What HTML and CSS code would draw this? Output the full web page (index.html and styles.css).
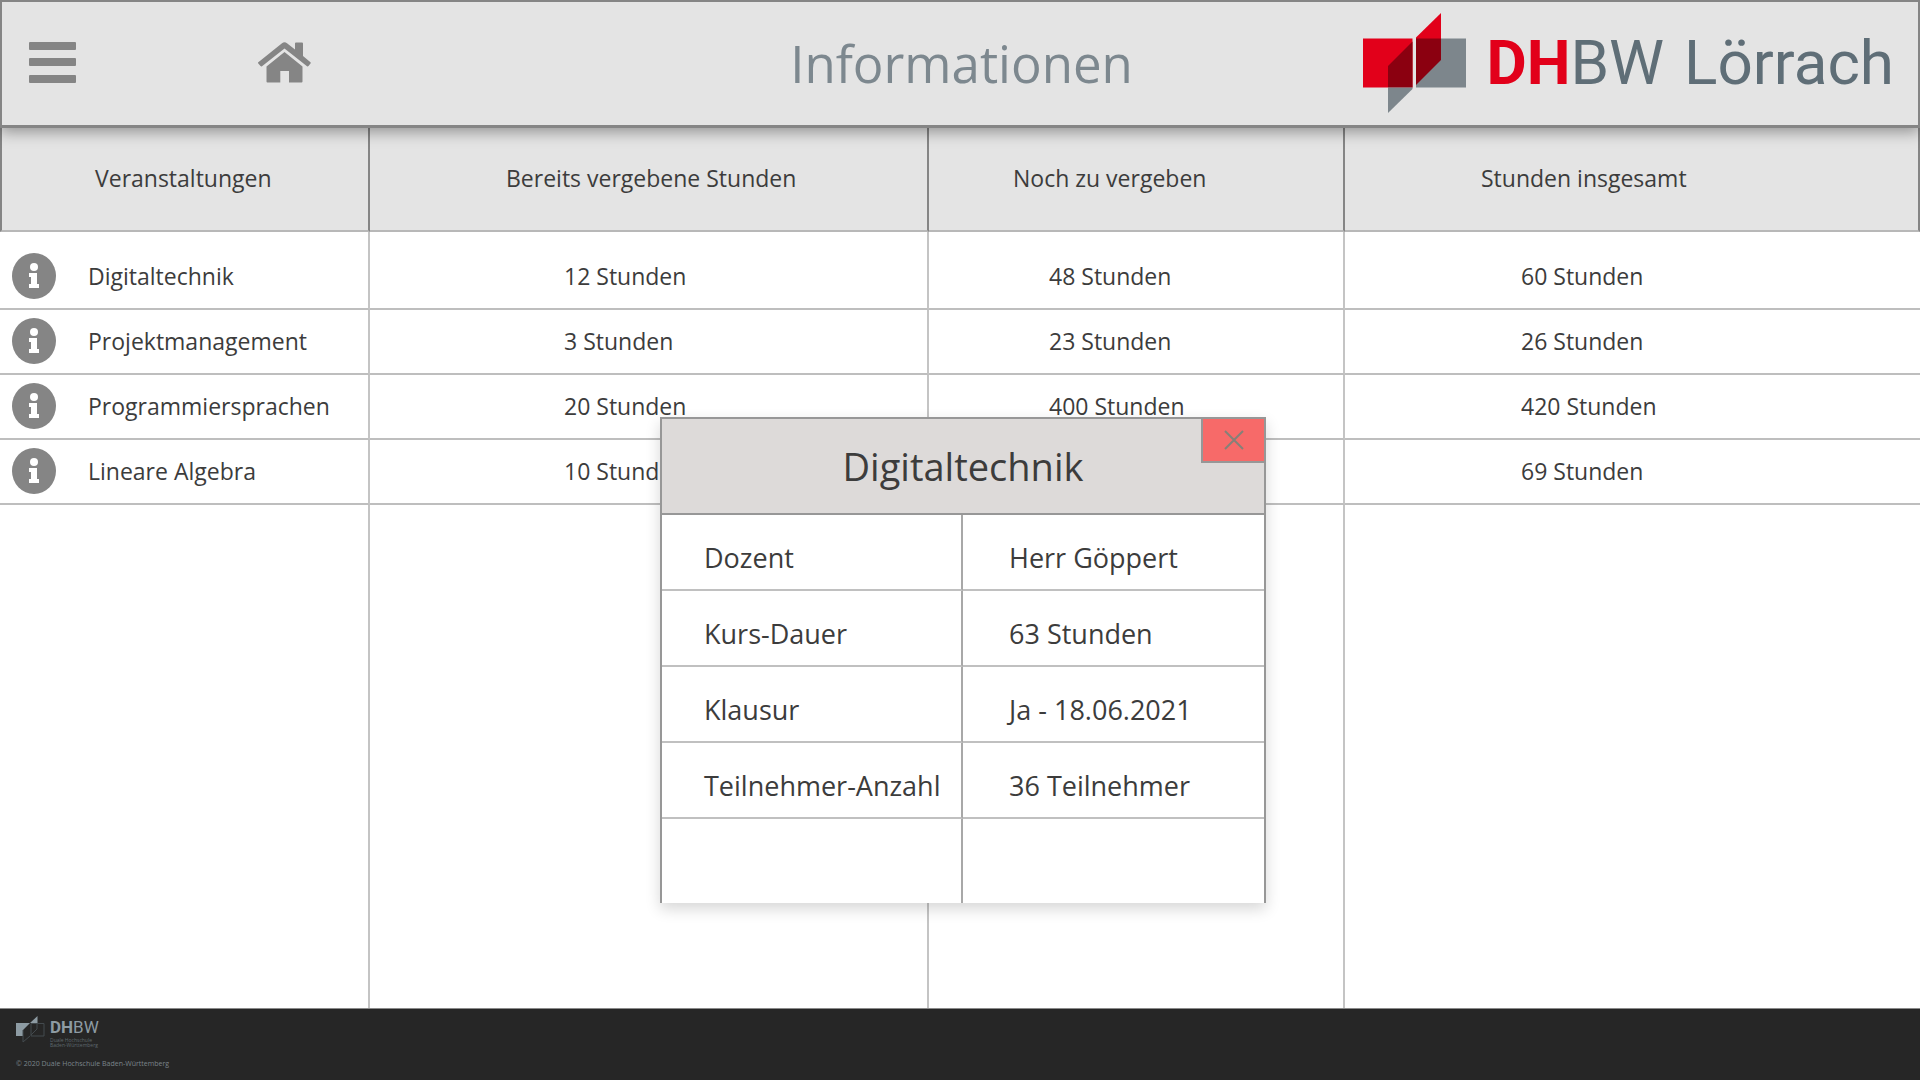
FILE: index.html
```html
<!DOCTYPE html>
<html lang="de">
<head>
<meta charset="utf-8">
<meta name="viewport" content="width=device-width, initial-scale=1">
<title>Informationen – DHBW Lörrach</title>
<link rel="stylesheet" href="styles.css">
</head>
<body>
<svg class="sprite" aria-hidden="true">
  <symbol id="info" viewBox="0 0 44 46">
    <ellipse cx="22" cy="23" rx="22" ry="23" fill="#858585"/>
    <circle cx="22" cy="14" r="4" fill="#fff"/>
    <path d="M17 20h8v11h2v4H17v-4h2v-7h-2z" fill="#fff"/>
  </symbol>
</svg>
<header class="topbar">
  <nav class="topnav">
    <button class="icon-button" type="button" aria-label="Menü">
      <svg width="47" height="41" viewBox="0 0 47 41" fill="#858585">
        <rect width="47" height="8" rx="1"/><rect y="16" width="47" height="8" rx="1"/><rect y="33" width="47" height="8" rx="1"/>
      </svg>
    </button>
    <a class="icon-button" href="#" aria-label="Startseite">
      <svg width="53" height="41" viewBox="0 0 53 41" fill="#858585">
        <path d="M0 20.500 24 1.200Q26.500-.8 29 1.200L37 7.600V1.500Q37 .5 38 .5H44Q45 .5 45 1.500V14L52.500 20.200Q53 21 52.500 21.600L50.500 24Q49.700 24.800 49 24.200L26.500 6.500 4 24.200Q3.200 24.800 2.500 24L.3 21.500Q-.2 21 0 20.500Z"/>
        <path d="M26.500 10 44.500 24.500V39.500Q44.500 40.500 43.500 40.500H31V29H22.300V40.500H9.500Q8.500 40.500 8.500 39.500V24.500Z"/>
      </svg>
    </a>
  </nav>
  <h1 class="page-title">Informationen</h1>
  <div class="brand">
    <svg width="103" height="100" viewBox="0 0 103 100">
      <path d="M0 25.500H49.500V74.500H0z" fill="#e2001a"/>
      <path d="M25 53 49.500 28.500V74.500H25z" fill="#8b0010"/>
      <path d="M25 74.500H49.500V76L25 100z" fill="#7d868c"/>
      <path d="M53 25.500H103V74.500H53z" fill="#7d868c"/>
      <path d="M53 24.500 78 0V26H53z" fill="#e2001a"/>
      <path d="M53 25.500H78V47L53 72z" fill="#8b0010"/>
    </svg>
    <span class="brand-name"><span><b>DH</b>BW</span><span>Lörrach</span></span>
  </div>
</header>
<main class="content">
  <table class="courses">
    <colgroup><col class="c1"><col class="c2"><col class="c3"><col class="c4"></colgroup>
    <thead>
      <tr><th scope="col">Veranstaltungen</th><th scope="col">Bereits vergebene Stunden</th><th scope="col">Noch zu vergeben</th><th scope="col">Stunden insgesamt</th></tr>
    </thead>
    <tbody>
      <tr><td><div class="course"><button class="info" type="button" aria-label="Info zu Digitaltechnik"><svg width="44" height="46"><use href="#info"/></svg></button>Digitaltechnik</div></td><td>12 Stunden</td><td>48 Stunden</td><td>60 Stunden</td></tr>
      <tr><td><div class="course"><button class="info" type="button" aria-label="Info zu Projektmanagement"><svg width="44" height="46"><use href="#info"/></svg></button>Projektmanagement</div></td><td>3 Stunden</td><td>23 Stunden</td><td>26 Stunden</td></tr>
      <tr><td><div class="course"><button class="info" type="button" aria-label="Info zu Programmiersprachen"><svg width="44" height="46"><use href="#info"/></svg></button>Programmiersprachen</div></td><td>20 Stunden</td><td>400 Stunden</td><td>420 Stunden</td></tr>
      <tr><td><div class="course"><button class="info" type="button" aria-label="Info zu Lineare Algebra"><svg width="44" height="46"><use href="#info"/></svg></button>Lineare Algebra</div></td><td>10 Stunden</td><td></td><td>69 Stunden</td></tr>
      <tr class="filler"><td></td><td></td><td></td><td></td></tr>
    </tbody>
  </table>
</main>
<section class="dialog" role="dialog" aria-labelledby="dialog-title">
  <div class="dialog-head">
    <h2 id="dialog-title">Digitaltechnik</h2>
    <button class="close" type="button" aria-label="Schließen">
      <svg width="20" height="20" viewBox="0 0 20 20" stroke="#858078" stroke-width="2"><path d="M1 1 19 19M19 1 1 19"/></svg>
    </button>
  </div>
  <table class="details">
    <tbody>
      <tr><th scope="row">Dozent</th><td>Herr Göppert</td></tr>
      <tr><th scope="row">Kurs-Dauer</th><td>63 Stunden</td></tr>
      <tr><th scope="row">Klausur</th><td>Ja - 18.06.2021</td></tr>
      <tr><th scope="row">Teilnehmer-Anzahl</th><td>36 Teilnehmer</td></tr>
      <tr><td></td><td></td></tr>
    </tbody>
  </table>
</section>
<footer class="footer">
  <div class="footer-brand">
    <svg width="29" height="27" viewBox="0 0 29 27">
      <path d="M0 7H14L7 14V20H0z" fill="#8d9ba3"/>
      <path d="M14 7 21.500 0V7z" fill="#8d9ba3"/>
      <path d="M15 7.500H28V20H15zM14 20 7 26V14M21 7.500V13L15 19" fill="none" stroke="#434a4e"/>
    </svg>
    <div>
      <div class="footer-name"><b>DH</b>BW</div>
      <div class="footer-sub">Duale Hochschule<br>Baden-Württemberg</div>
    </div>
  </div>
  <small class="copyright">© 2020 Duale Hochschule Baden-Württemberg</small>
</footer>
</body>
</html>
```
FILE: styles.css
```css
* { box-sizing: border-box; }

body {
  margin: 0;
  min-height: 100vh;
  display: flex;
  flex-direction: column;
  position: relative;
  background: #fff;
  color: #3c3c3c;
  font: 23px/32px "Open Sans", "Noto Sans", sans-serif;
}

h1, h2 { margin: 0; font-weight: 400; }

button { padding: 0; border: 0; background: none; cursor: pointer; }

svg { display: block; }

.sprite { position: absolute; width: 0; height: 0; }

.topbar {
  position: relative;
  display: grid;
  grid-template-columns: 1fr auto 1fr;
  align-items: center;
  height: 128px;
  padding: 0 24px 2px 27px;
  background: #e4e4e4;
  border: 2px solid #858585;
  border-bottom-width: 3px;
  box-shadow: 0 4px 14px rgba(0, 0, 0, .36);
}

.topnav { display: flex; align-items: center; gap: 182px; }

.page-title { color: #7d888f; font-size: 51px; line-height: 72px; }

.brand { display: flex; justify-content: flex-end; align-items: center; gap: 20px; }

.brand-name {
  display: flex;
  gap: 20px;
  color: #5f6e77;
  font: 62px/72px Roboto, sans-serif;
}

.brand-name b { color: #e2001a; }

.content { flex: 1; display: flex; }

.courses {
  width: 100%;
  table-layout: fixed;
  border-collapse: separate;
  border-spacing: 0;
}

.c1 { width: 370px; }
.c2 { width: 559px; }
.c3 { width: 416px; }

.courses thead tr { background: #e4e4e4; }

.courses th {
  height: 104px;
  padding: 0 0 2px 136px;
  text-align: left;
  font-weight: 400;
  border-right: 2px solid #858585;
  border-bottom: 2px solid #b8b8b8;
}

.courses th:first-child { padding-left: 93px; border-left: 2px solid #858585; }
.courses th:nth-child(3) { padding-left: 84px; }

.courses td {
  height: 65px;
  padding: 0 0 2px 194px;
  border-right: 2px solid #c4c4c4;
  border-bottom: 2px solid #bebebe;
}

.courses td:first-child { padding-left: 12px; }
.courses td:nth-child(3) { padding-left: 120px; }
.courses td:nth-child(4) { padding-left: 176px; border-right: 0; }
.courses tbody tr:first-child td { height: 78px; padding-top: 13px; }
.courses .filler td { height: auto; border-bottom: 0; }

.course { display: flex; align-items: center; gap: 32px; }

.dialog {
  position: absolute;
  top: 417px;
  left: calc(50% - 300px);
  width: 606px;
  background: #fff;
  border: 2px solid #979797;
  border-bottom: 0;
  box-shadow: 0 6px 14px rgba(0, 0, 0, .16);
}

.dialog-head {
  position: relative;
  display: flex;
  align-items: center;
  justify-content: center;
  height: 96px;
  background: #dddad9;
  border-bottom: 2px solid #979797;
}

.dialog-head h2 { font-size: 38px; line-height: 52px; }

.close {
  position: absolute;
  top: 0;
  right: 0;
  display: grid;
  place-items: center;
  width: 63px;
  height: 44px;
  background: #f76a69;
  border: solid #979797;
  border-width: 0 0 2px 2px;
}

.details {
  width: 100%;
  table-layout: fixed;
  border-collapse: separate;
  border-spacing: 0;
  font-size: 27px;
  line-height: 40px;
}

.details th, .details td {
  height: 76px;
  padding: 12px 0 0 46px;
  text-align: left;
  font-weight: 400;
  white-space: nowrap;
  border-bottom: 2px solid #c0c0c0;
}

.details th { padding-left: 42px; }
.details tr > :first-child { border-right: 2px solid #a8a8a8; }
.details tr:last-child td { height: 84px; border-bottom: 0; }

.footer {
  padding: 7px 16px 8px;
  background: #262626;
  color: #7b858b;
  border-top: 1px solid #8a8a8a;
}

.footer-brand { display: flex; gap: 5px; }
.footer-name { color: #8d9ba3; font: 17px/22px Roboto, sans-serif; }
.footer-sub { color: #5f696e; font-size: 5px; line-height: 5px; }
.copyright { display: block; margin-top: 8px; font-size: 7px; line-height: 16px; }
```
